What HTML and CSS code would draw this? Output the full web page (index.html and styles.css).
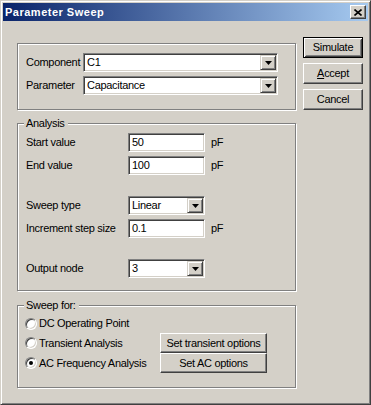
FILE: index.html
```html
<!DOCTYPE html>
<html lang="en">
<head>
    <meta charset="UTF-8">
    <title>Parameter Sweep</title>
    <link rel="stylesheet" href="styles.css">
</head>
<body>
    <div class="window">
        <div class="titlebar">
            <span class="title">Parameter Sweep</span>
            <button class="close-button">
                <svg width="8" height="7" viewBox="0 0 8 7"><path d="M0.5 0.5L7.5 6.5M7.5 0.5L0.5 6.5" stroke="#000" stroke-width="1.6"/></svg>
            </button>
        </div>
        <div class="dialog">
            <div class="groups">
                <div class="group group-main">
                    <span>Component</span>
                    <div class="combo">
                        <span class="combo-value">C1</span>
                        <span class="combo-arrow"><svg width="7" height="4" viewBox="0 0 7 4"><path d="M0 0H7L3.5 4Z" fill="#000"/></svg></span>
                    </div>
                    <span>Parameter</span>
                    <div class="combo">
                        <span class="combo-value">Capacitance</span>
                        <span class="combo-arrow"><svg width="7" height="4" viewBox="0 0 7 4"><path d="M0 0H7L3.5 4Z" fill="#000"/></svg></span>
                    </div>
                </div>

                <fieldset class="group group-analysis">
                    <legend>Analysis</legend>
                    <div class="row">
                        <span class="row-label">Start value</span>
                        <div class="field">50</div>
                        <span class="unit">pF</span>
                    </div>
                    <div class="row">
                        <span class="row-label">End value</span>
                        <div class="field">100</div>
                        <span class="unit">pF</span>
                    </div>
                    <div class="row spaced">
                        <span class="row-label">Sweep type</span>
                        <div class="combo combo-small">
                            <span class="combo-value">Linear</span>
                            <span class="combo-arrow"><svg width="7" height="4" viewBox="0 0 7 4"><path d="M0 0H7L3.5 4Z" fill="#000"/></svg></span>
                        </div>
                    </div>
                    <div class="row">
                        <span class="row-label">Increment step size</span>
                        <div class="field">0.1</div>
                        <span class="unit">pF</span>
                    </div>
                    <div class="row spaced">
                        <span class="row-label">Output node</span>
                        <div class="combo combo-small">
                            <span class="combo-value">3</span>
                            <span class="combo-arrow"><svg width="7" height="4" viewBox="0 0 7 4"><path d="M0 0H7L3.5 4Z" fill="#000"/></svg></span>
                        </div>
                    </div>
                </fieldset>

                <fieldset class="group group-sweep">
                    <legend>Sweep for:</legend>
                    <label class="option"><span class="radio"></span>DC Operating Point</label>
                    <span></span>
                    <label class="option"><span class="radio"></span>Transient Analysis</label>
                    <button class="btn">Set transient options</button>
                    <label class="option"><span class="radio checked"></span>AC Frequency Analysis</label>
                    <button class="btn">Set AC options</button>
                </fieldset>
            </div>

            <div class="actions">
                <button class="btn btn-default">Simulate</button>
                <button class="btn"><u>A</u>ccept</button>
                <button class="btn">Cancel</button>
            </div>
        </div>
    </div>
</body>
</html>
```

FILE: styles.css
```css
* {
    margin: 0;
    padding: 0;
    box-sizing: border-box;
}

body {
    background: #d4d0c8;
    color: #000;
    font: 11px/13px "Liberation Sans", Arial, sans-serif;
    letter-spacing: -0.3px;
}

.window {
    width: 371px;
    height: 405px;
    padding: 2px;
    background: #d4d0c8;
    border: 1px solid;
    border-color: #d4d0c8 #404040 #404040 #d4d0c8;
    box-shadow: inset 1px 1px #fff, inset -1px -1px #808080;
}

.titlebar {
    height: 18px;
    display: flex;
    align-items: center;
    justify-content: space-between;
    padding: 0 2px;
    background: linear-gradient(to right, #0a246a, #a6caf0);
}

.title {
    color: #fff;
    font-weight: bold;
    letter-spacing: 0.5px;
}

.close-button {
    width: 16px;
    height: 14px;
    display: flex;
    align-items: center;
    justify-content: center;
    background: #d4d0c8;
    border: 1px solid;
    border-color: #fff #404040 #404040 #fff;
    box-shadow: inset -1px -1px #808080;
}

.dialog {
    display: flex;
    align-items: flex-start;
}

.groups {
    width: 279px;
    margin-left: 14px;
    padding-top: 22px;
    display: flex;
    flex-direction: column;
}

.actions {
    width: 60px;
    margin-left: 7px;
    padding-top: 16px;
    display: flex;
    flex-direction: column;
    gap: 5px;
}

/* etched group boxes */
.group {
    border: 1px solid #808080;
    box-shadow: inset 1px 1px #fff, 1px 1px #fff;
    min-width: 0;
}

.group legend {
    margin-left: -2px;
    padding: 0 3px 0 2px;
    background: #d4d0c8;
}

.group-main {
    display: grid;
    grid-template-columns: 57px 195px;
    grid-auto-rows: 19px;
    row-gap: 4px;
    align-items: center;
    padding: 9px 0 14px 8px;
}

.group-analysis {
    margin-top: 7px;
    padding: 3px 0 12px 8px;
}

.group-sweep {
    margin-top: 8px;
    padding: 2px 0 14px 8px;
    display: grid;
    grid-template-columns: 134px 107px;
    grid-template-rows: 19px 20px 20px;
    align-items: center;
}

.row {
    display: flex;
    align-items: center;
    height: 19px;
    margin-top: 4px;
}

.row:first-of-type {
    margin-top: 0;
}

.row.spaced {
    margin-top: 21px;
}

.row-label {
    width: 102px;
}

.unit {
    margin-left: 6px;
}

/* sunken controls */
.field,
.combo {
    height: 19px;
    background: #fff;
    border: 1px solid;
    border-color: #808080 #fff #fff #808080;
    box-shadow: inset 1px 1px #404040, inset -1px -1px #d4d0c8;
}

.field {
    width: 77px;
    display: flex;
    align-items: center;
    padding-left: 3px;
}

.combo {
    display: flex;
    padding: 1px;
}

.combo-small {
    width: 77px;
}

.combo-value {
    flex: 1;
    display: flex;
    align-items: center;
    padding-left: 2px;
}

.combo-arrow {
    width: 16px;
    display: flex;
    align-items: center;
    justify-content: center;
    background: #d4d0c8;
    border: 1px solid;
    border-color: #d4d0c8 #404040 #404040 #d4d0c8;
    box-shadow: inset 1px 1px #fff, inset -1px -1px #808080;
}

.option {
    display: flex;
    align-items: center;
    gap: 2px;
    margin-left: -1px;
}

.radio {
    width: 12px;
    height: 12px;
    border-radius: 50%;
    background: #fff;
    border: 1px solid;
    border-color: #808080 #fff #fff #808080;
    box-shadow: inset 1px 1px #404040, inset -1px -1px #d4d0c8;
    display: flex;
    align-items: center;
    justify-content: center;
}

.radio.checked::after {
    content: "";
    width: 4px;
    height: 4px;
    border-radius: 50%;
    background: #000;
}

.btn {
    height: 20px;
    display: flex;
    align-items: center;
    justify-content: center;
    font: inherit;
    letter-spacing: inherit;
    color: #000;
    background: #d4d0c8;
    border: 1px solid;
    border-color: #fff #404040 #404040 #fff;
    box-shadow: inset -1px -1px #808080, inset 1px 1px #d4d0c8;
}

.actions .btn {
    height: 21px;
}

.btn-default {
    border: 1px solid #000;
    box-shadow: inset 1px 1px #fff, inset -1px -1px #404040, inset 2px 2px #d4d0c8, inset -2px -2px #808080;
}
```
